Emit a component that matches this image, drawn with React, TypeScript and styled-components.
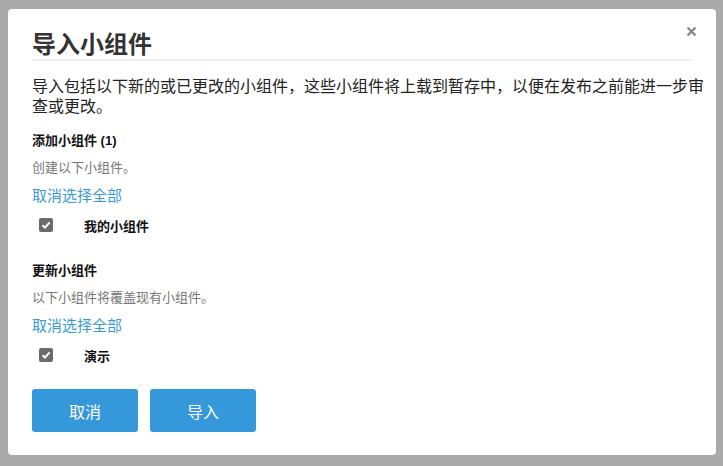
import React, { useState } from "react";
import styled, { createGlobalStyle } from "styled-components";

const GlobalStyle = createGlobalStyle`
  html, body {
    margin: 0;
    padding: 0;
    background: #aaaaaa;
  }
  body {
    font-family: "Liberation Sans", "Noto Sans CJK SC", sans-serif;
  }
`

const Overlay = styled.div`
  width: 723px;
  height: 466px;
  box-sizing: border-box;
  padding: 9px 7px 11px 8px;
  background: #aaaaaa;
`

const Modal = styled.div`
  position: relative;
  box-sizing: border-box;
  width: 708px;
  height: 446px;
  background: #fff;
  border-radius: 4px;
  padding: 24px 24px 0 24px;
  display: flex;
  flex-direction: column;
`

const CloseButton = styled.button`
  position: absolute;
  top: 12px;
  right: 15px;
  border: 0;
  background: none;
  padding: 0;
  width: 20px;
  height: 20px;
  display: flex;
  align-items: center;
  justify-content: center;
  cursor: pointer;
`

const Title = styled.h2`
  margin: 0;
  font-size: 24px;
  line-height: 24px;
  font-weight: bold;
  color: #333;
  padding-bottom: 2px;
  border-bottom: 2px solid #f0f0f0;
`

const Intro = styled.p`
  margin: 16px -12px 0 0;
  font-size: 16px;
  line-height: 20px;
  color: #222;
`

const SectionTitle = styled.h4<{ $gap: number }>`
  margin: ${(p) => p.$gap}px 0 0;
  font-size: 13px;
  line-height: 18px;
  font-weight: bold;
  color: #111;
`

const Hint = styled.div`
  margin-top: 9px;
  font-size: 13px;
  line-height: 18px;
  color: #777;
`

const Link = styled.a`
  display: block;
  margin-top: 9px;
  font-size: 15px;
  line-height: 20px;
  color: #3a9ad9;
  text-decoration: none;
  cursor: pointer;
`

const CheckRow = styled.label`
  display: flex;
  align-items: center;
  height: 20px;
  margin-top: 9px;
  padding-left: 7px;
  cursor: pointer;
`

const Box = styled.span<{ $checked: boolean }>`
  width: 14px;
  height: 14px;
  border-radius: 2px;
  background: ${(p) => (p.$checked ? "#6b6b6b" : "#fff")};
  border: ${(p) => (p.$checked ? "none" : "1px solid #999")};
  box-sizing: border-box;
  display: flex;
  align-items: center;
  justify-content: center;
`

const CheckLabel = styled.span`
  margin-left: 31px;
  font-size: 13px;
  font-weight: bold;
  color: #111;
`

const Actions = styled.div`
  display: flex;
  gap: 12px;
  margin-top: 24px;
`

const ActionButton = styled.button`
  width: 106px;
  height: 43px;
  border: 0;
  border-radius: 3px;
  background: #3598db;
  color: #fff;
  font-family: inherit;
  font-size: 16px;
  cursor: pointer;
`

const Check: React.FunctionComponent<{ label: string }> = ({ label }) => {
  const [checked, setChecked] = useState<boolean>(true)
  return <CheckRow onClick={() => setChecked(!checked)}>
    <Box $checked={checked}>
      {checked && <svg width="10" height="10" viewBox="0 0 10 10">
        <path d="M1.5 5.2 L4 7.6 L8.6 2.4" stroke="#fff" strokeWidth="2" fill="none" />
      </svg>}
    </Box>
    <CheckLabel>{label}</CheckLabel>
  </CheckRow>
}

const App: React.FunctionComponent = () => {
  return <Overlay>
    <GlobalStyle />
    <Modal>
      <CloseButton aria-label="关闭">
        <svg width="11" height="11" viewBox="0 0 11 11">
          <path d="M1.5 1.5 L9.5 9.5 M9.5 1.5 L1.5 9.5" stroke="#8a8a8a" strokeWidth="2.4" />
        </svg>
      </CloseButton>
      <Title>导入小组件</Title>
      <Intro>导入包括以下新的或已更改的小组件，这些小组件将上载到暂存中，以便在发布之前能进一步审查或更改。</Intro>

      <SectionTitle $gap={15}>添加小组件 (1)</SectionTitle>
      <Hint>创建以下小组件。</Hint>
      <Link>取消选择全部</Link>
      <Check label="我的小组件" />

      <SectionTitle $gap={27}>更新小组件</SectionTitle>
      <Hint>以下小组件将覆盖现有小组件。</Hint>
      <Link>取消选择全部</Link>
      <Check label="演示" />

      <Actions>
        <ActionButton>取消</ActionButton>
        <ActionButton>导入</ActionButton>
      </Actions>
    </Modal>
  </Overlay>
}

export default App
